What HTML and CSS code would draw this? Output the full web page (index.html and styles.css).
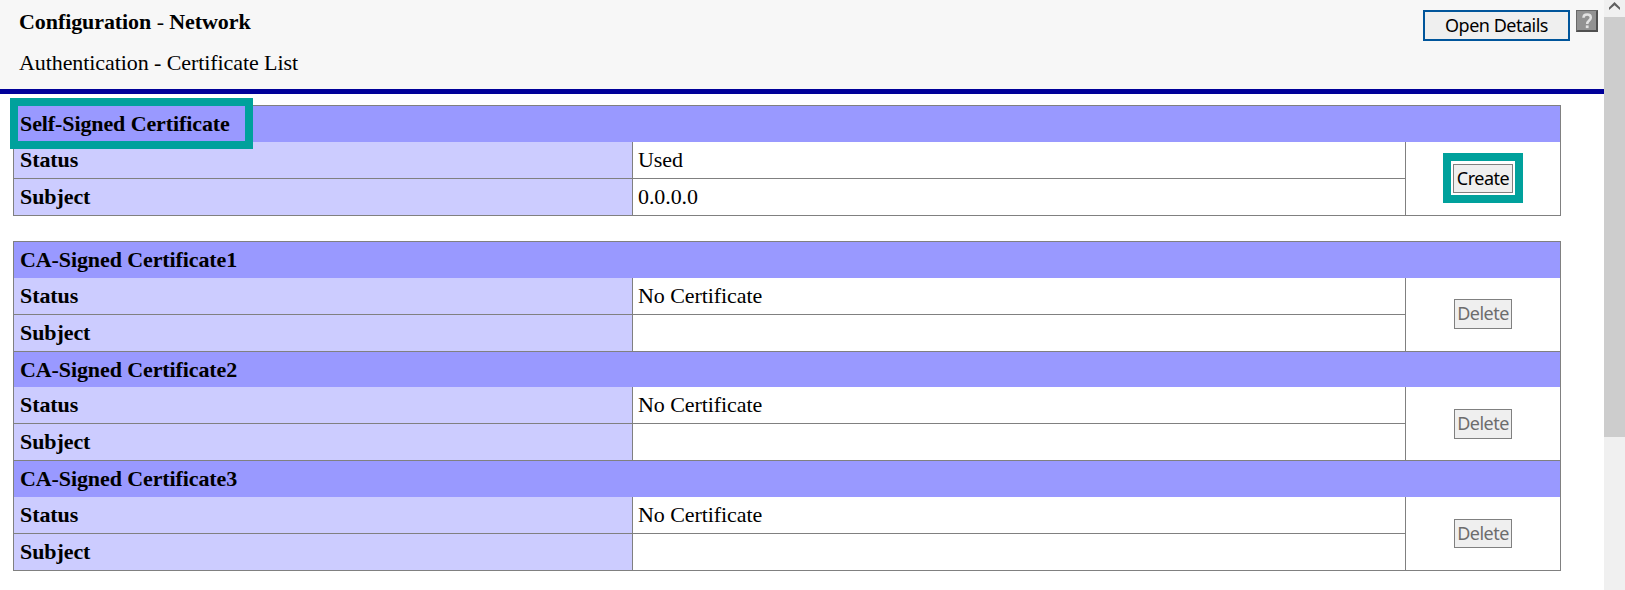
FILE: index.html
```html
<!DOCTYPE html>
<html lang="en">
<head>
<meta charset="utf-8">
<title>Certificate List</title>
<link rel="stylesheet" href="styles.css">
</head>
<body>
<div class="window">
  <div class="page">
    <header class="header">
      <div class="titles">
        <h1 class="title">Configuration <span class="dash">-</span> Network</h1>
        <p class="subtitle">Authentication - Certificate List</p>
      </div>
      <div class="actions">
        <button class="open">Open Details</button>
        <svg class="help" viewBox="0 0 22 22" width="22" height="22">
          <rect width="22" height="22" fill="#505050"/>
          <path d="M0 22V0H22L20.5 1.5H1.5V20.5z" fill="#686868"/>
          <rect x="1" y="1" width="19" height="19" fill="#929292"/>
          <path d="M7.5 7.8C7.5 3.5 14.8 3.5 14.8 7.8C14.8 10.6 11.2 10.5 11.2 14" fill="none" stroke="#e2e2e2" stroke-width="2.5"/>
          <rect x="9.8" y="15.4" width="2.8" height="2.7" fill="#e2e2e2"/>
        </svg>
      </div>
    </header>
    <main class="main">
      <section class="table">
        <h2 class="head">Self-Signed Certificate<i class="mark mark-title"></i></h2>
        <div class="body">
          <b class="label">Status</b><span class="value">Used</span>
          <b class="label line">Subject</b><span class="value line">0.0.0.0</span>
          <div class="cell"><button class="btn create">Create<i class="mark mark-btn"></i></button></div>
        </div>
      </section>
      <section class="table">
        <h2 class="head">CA-Signed Certificate1</h2>
        <div class="body">
          <b class="label">Status</b><span class="value">No Certificate</span>
          <b class="label line">Subject</b><span class="value line"></span>
          <div class="cell"><button class="btn first" disabled>Delete</button></div>
        </div>
        <h2 class="head next short">CA-Signed Certificate2</h2>
        <div class="body">
          <b class="label">Status</b><span class="value">No Certificate</span>
          <b class="label line">Subject</b><span class="value line"></span>
          <div class="cell"><button class="btn" disabled>Delete</button></div>
        </div>
        <h2 class="head next">CA-Signed Certificate3</h2>
        <div class="body">
          <b class="label">Status</b><span class="value">No Certificate</span>
          <b class="label line">Subject</b><span class="value line"></span>
          <div class="cell"><button class="btn last" disabled>Delete</button></div>
        </div>
      </section>
    </main>
  </div>
  <div class="scrollbar">
    <svg class="up" viewBox="0 0 21 17" width="21" height="17"><path d="M5 7.5L10.5 2L16 7.5V10L10.5 5.2L5 10z" fill="#606060"/></svg>
    <div class="thumb"></div>
  </div>
</div>
</body>
</html>
```
FILE: styles.css
```css
* { box-sizing: border-box; }
body { margin: 0; font: 22px/36px "Liberation Serif", serif; letter-spacing: -0.08px; color: #000; background: #fff; }
.window { display: flex; height: 590px; overflow: hidden; }
.page { flex: 1; }
.header { display: flex; justify-content: space-between; height: 94px; padding: 0 6px 0 19px; background: #f7f7f7; border-bottom: 5px solid #000099; }
.titles { padding-top: 4px; white-space: nowrap; }
.title { margin: 0; font-size: 22px; line-height: 36px; }
.dash { font-weight: normal; }
.subtitle { margin: 5px 0 0; }
.actions { display: flex; gap: 6px; padding-top: 10px; align-items: flex-start; }
.open, .btn { position: relative; font: 18px/24px "Noto Sans", sans-serif; letter-spacing: -0.5px; background: #efefef; padding: 0 0 2px; white-space: nowrap; color: #000; border-radius: 0; }
.open { width: 147px; height: 31px; border: 2px solid #00559b; }
.main { padding: 11px 0 0 13px; }
.table { width: 1548px; border: 1px solid #808080; margin-bottom: 25px; }
.head { position: relative; margin: 0; height: 36px; padding-left: 6px; font-size: 22px; line-height: 36px; letter-spacing: -0.1px; background: #9999ff; }
.next { height: 37px; border-top: 1px solid #808080; }
.short { height: 36px; line-height: 35px; }
.body { display: grid; grid-template-columns: 618px 773px 155px; grid-template-rows: 36px 37px; }
.label { padding-left: 6px; background: #ccccff; line-height: 35px; }
.value { padding-left: 5px; border-left: 1px solid #808080; line-height: 35px; }
.line { border-top: 1px solid #808080; }
.cell { grid-column: 3; grid-row: 1 / 3; border-left: 1px solid #808080; display: flex; align-items: center; justify-content: center; }
.btn { width: 58px; height: 30px; border: 1px solid #808080; }
.btn:disabled { color: #6d6d6d; }
.btn.create { width: 60px; height: 29px; }
.btn.first { margin-bottom: 1px; }
.btn.last { height: 29px; }
.mark { position: absolute; border: 8px solid #00a19c; }
.mark-title { left: -4px; top: -8px; width: 243px; height: 51px; }
.mark-btn { left: -11px; top: -12px; width: 80px; height: 50px; }
.scrollbar { width: 21px; background: #f0f0f0; }
.up { display: block; }
.thumb { height: 420px; background: #cdcdcd; }
```
